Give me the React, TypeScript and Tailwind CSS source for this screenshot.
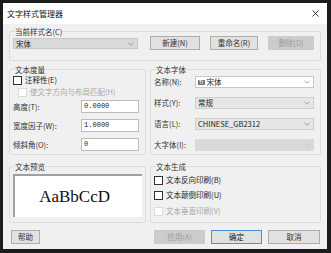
import React from 'react'

const font = { fontFamily: '"Noto Sans CJK SC", "DejaVu Sans", sans-serif' }

function Chevron({ dim }: { dim?: boolean }) {
  return (
    <svg width="6" height="4" viewBox="0 0 6 4" className="shrink-0">
      <path d="M0.5 0.8 L3 3.2 L5.5 0.8" fill="none" stroke={dim ? '#c4c4c4' : '#8a8a8a'} strokeWidth="0.8" />
    </svg>
  )
}

function Check({ label, disabled }: { label: string; disabled?: boolean }) {
  return (
    <div className={`flex items-center gap-[3px] h-[12px] ${disabled ? 'text-[#a8a8a8]' : 'text-[#222]'}`}>
      <span className={`w-[9px] h-[9px] border bg-white ${disabled ? 'border-[#dcdcdc]' : 'border-[#333]'}`} />
      <span>{label}</span>
    </div>
  )
}

function Btn({ label, disabled, focus, w }: { label: string; disabled?: boolean; focus?: boolean; w: string }) {
  return (
    <div
      className={`${w} h-[14px] flex items-center justify-center border text-[7.5px] ${
        disabled
          ? 'bg-[#cccccc] border-[#cccccc] text-[#999]'
          : focus
          ? 'bg-[#e1e1e1] border-[#4a90d9] text-[#222]'
          : 'bg-[#e1e1e1] border-[#adadad] text-[#333]'
      }`}
    >
      {label}
    </div>
  )
}

function Group({ title, className, children }: { title: string; className: string; children: React.ReactNode }) {
  return (
    <fieldset className={`border border-[#dcdcdc] rounded-[2px] ${className}`}>
      <legend className="px-0 ml-[2px] text-[#333] leading-[9px]">{title}</legend>
      {children}
    </fieldset>
  )
}

export default function App() {
  return (
    <div className="w-[331px] h-[253px] bg-[#1c1c1c] pt-[3px] pl-[3px]" style={font}>
      <div className="w-[324px] h-[246px] bg-[#f0f0f0] flex flex-col text-[7.5px] text-[#333]">
        {/* 标题栏 */}
        <div className="h-[21px] bg-white flex items-center justify-between pl-[4px] pr-[8px]">
          <span className="text-[8px] text-[#111]">文字样式管理器</span>
          <svg width="7" height="7" viewBox="0 0 7 7">
            <path d="M0.5 0.5 L6.5 6.5 M6.5 0.5 L0.5 6.5" stroke="#222" strokeWidth="0.9" />
          </svg>
        </div>

        <div className="px-[6px] pt-[3px] flex flex-col">
          {/* 当前样式名 */}
          <Group title="当前样式名(C)" className="h-[34px] px-[3px] flex">
            <div className="flex items-start gap-[12px] pt-[2px]">
              <div className="w-[125px] h-[11px] bg-[#d9d9d9] border border-[#c8c8c8] flex items-center justify-between pl-[2px] pr-[3px]">
                <span className="text-[#222]">宋体</span>
                <Chevron />
              </div>
              <div className="flex gap-[10px] -mt-[2px]">
                <Btn label="新建(N)" w="w-[50px]" />
                <Btn label="重命名(R)" w="w-[48px]" />
                <Btn label="删除(D)" w="w-[46px]" disabled />
              </div>
            </div>
          </Group>

          <div className="flex gap-[4px] mt-[4px]">
            {/* 左列 */}
            <div className="w-[138px] flex flex-col gap-[7px]">
              <Group title="文本度量" className="h-[90px] px-[3px] flex flex-col">
                <Check label="注释性(E)" />
                <div className="pl-[5px]">
                  <Check label="使文字方向与布局匹配(H)" disabled />
                </div>
                <div className="flex flex-col gap-[6px] mt-[2px]">
                  {[
                    ['高度(T):', '0.0000'],
                    ['宽度因子(W):', '1.0000'],
                    ['倾斜角(O):', '0'],
                  ].map(([l, v]) => (
                    <div key={l} className="flex items-center justify-between pr-[3px]">
                      <span>{l}</span>
                      <div className="w-[58px] h-[13px] bg-white border border-[#bdbdbd] flex items-center pl-[2px] text-[#222] font-['Liberation_Mono'] text-[7px]">
                        {v}
                      </div>
                    </div>
                  ))}
                </div>
              </Group>
              <Group title="文本预览" className="h-[61px] px-[3px] flex flex-col">
                <div className="mt-[3px] h-[43px] bg-white border-t-2 border-l-2 border-[#a0a0a0] flex items-center justify-center">
                  <span className="text-[17px] text-[#111] font-['Liberation_Serif'] -ml-[8px]">AaBbCcD</span>
                </div>
              </Group>
            </div>

            {/* 右列 */}
            <div className="w-[172px] flex flex-col gap-[7px]">
              <Group title="文本字体" className="h-[90px] px-[3px] flex flex-col gap-[9px]">
                <div className="flex items-center justify-between pr-[3px] mt-[2px]">
                  <span>名称(N):</span>
                  <div className="w-[119px] h-[12px] bg-white border border-[#c8c8c8] flex items-center justify-between pl-[2px] pr-[3px]">
                    <span className="flex items-center gap-[2px] text-[#222]">
                      <span className="text-[5px] leading-none bg-[#777] text-white px-[1px] font-['Liberation_Sans']">Tr</span>
                      宋体
                    </span>
                    <Chevron />
                  </div>
                </div>
                {[
                  ['样式(Y):', '常规'],
                  ['语言(L):', 'CHINESE_GB2312'],
                ].map(([l, v]) => (
                  <div key={l} className="flex items-center justify-between pr-[3px]">
                    <span>{l}</span>
                    <div className="w-[119px] h-[12px] bg-[#e6e6e6] border border-[#cfcfcf] flex items-center justify-between pl-[2px] pr-[3px]">
                      <span className="text-[#222]">{v}</span>
                      <Chevron />
                    </div>
                  </div>
                ))}
                <div className="flex items-center justify-between pr-[3px]">
                  <span>大字体(I):</span>
                  <div className="w-[119px] h-[12px] bg-[#d9d9d9] border border-[#d9d9d9] flex items-center justify-end pr-[3px]">
                    <Chevron dim />
                  </div>
                </div>
              </Group>
              <Group title="文本生成" className="h-[61px] px-[3px] flex flex-col gap-[3px]">
                <div className="mt-[3px]">
                  <Check label="文本反向印刷(B)" />
                </div>
                <Check label="文本颠倒印刷(U)" />
                <div className="mt-[1px]">
                  <Check label="文本垂直印刷(V)" disabled />
                </div>
              </Group>
            </div>
          </div>

          {/* 底部按钮 */}
          <div className="flex items-center mt-[7px] pl-[2px] pr-[1px]">
            <Btn label="帮助" w="w-[29px]" />
            <div className="flex-1" />
            <div className="flex gap-[6px]">
              <Btn label="应用(A)" w="w-[51px]" disabled />
              <Btn label="确定" w="w-[51px]" focus />
              <Btn label="取消" w="w-[52px]" />
            </div>
          </div>
        </div>
      </div>
    </div>
  )
}
